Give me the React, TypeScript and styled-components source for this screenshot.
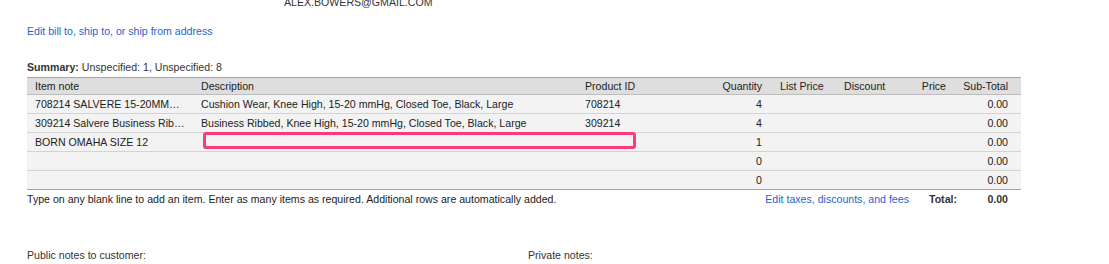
import { createGlobalStyle, styled } from "styled-components";

const GlobalStyle = createGlobalStyle`
  body {
    margin: 0;
    background: #fff;
    font: 10.6px/14px "Liberation Sans", Arial, sans-serif;
    color: #222;
  }
`;

const Page = styled.div`
  padding-left: 27px;
  width: 994px;
  height: 264px;
  overflow: hidden;
`;

const Email = styled.div`
  margin-top: -5px;
  padding-left: 257px;
  color: #333;
`;

const Link = styled.a`
  color: #1f64c8;
  text-decoration: none;
  cursor: pointer;
`;

const EditAddress = styled.div`
  margin-top: 15px;
`;

const Summary = styled.div`
  margin-top: 22px;
  color: #333;
  b {
    font-weight: bold;
  }
`;

const Table = styled.div`
  position: relative;
  margin-top: 3px;
  border-bottom: 1px solid #a3a3a3;
`;

const columns = "166px 384px 123px 70px 66px 64px 54px 67px";

const HeaderRow = styled.div`
  display: grid;
  grid-template-columns: ${columns};
  height: 16px;
  line-height: 17px;
  background: #dedede;
  border-top: 1px solid #a5a5a5;
  border-bottom: 1px solid #bdbdbd;
`;

const Row = styled.div`
  display: grid;
  grid-template-columns: ${columns};
  height: 18px;
  line-height: 19px;
  background: #f3f3f3;
  & + & {
    border-top: 1px solid #d3d3d3;
  }
`;

const Cell = styled.div<{ $align?: "left" | "right"; $pl?: number; $pr?: number }>`
  text-align: ${(p) => p.$align ?? "left"};
  padding-left: ${(p) => p.$pl ?? 8}px;
  padding-right: ${(p) => p.$pr ?? 8}px;
  white-space: nowrap;
  overflow: hidden;
  text-overflow: ellipsis;
`;

const Highlight = styled.div`
  position: absolute;
  left: 176px;
  top: 55px;
  width: 427px;
  height: 11px;
  border: 3px solid #fb3a78;
  border-radius: 3px;
`;

const Footer = styled.div`
  display: flex;
  justify-content: space-between;
  margin-top: 2px;
  padding-right: 13px;
`;

const Totals = styled.div`
  display: flex;
  align-items: center;
`;

const TotalLabel = styled.span`
  font-weight: bold;
  color: #333;
  margin-left: 20px;
`;

const TotalValue = styled.span`
  font-weight: bold;
  color: #333;
  width: 51px;
  text-align: right;
`;

const Notes = styled.div`
  display: grid;
  grid-template-columns: 501px 1fr;
  margin-top: 42px;
  color: #333;
`;

type Item = { note: string; desc: string; id: string; qty: string };

const items: Item[] = [
  {
    note: "708214 SALVERE 15-20MMHG CUSHION",
    desc: "Cushion Wear, Knee High, 15-20 mmHg, Closed Toe, Black, Large",
    id: "708214",
    qty: "4",
  },
  {
    note: "309214 Salvere Business Ribbed",
    desc: "Business Ribbed, Knee High, 15-20 mmHg, Closed Toe, Black, Large",
    id: "309214",
    qty: "4",
  },
  { note: "BORN OMAHA SIZE 12", desc: "", id: "", qty: "1" },
  { note: "", desc: "", id: "", qty: "0" },
  { note: "", desc: "", id: "", qty: "0" },
];

export default function App() {
  return (
    <Page>
      <GlobalStyle />
      <Email>ALEX.BOWERS@GMAIL.COM</Email>
      <EditAddress>
        <Link>Edit bill to, ship to, or ship from address</Link>
      </EditAddress>
      <Summary>
        <b>Summary:</b> Unspecified: 1, Unspecified: 8
      </Summary>
      <Table>
        <HeaderRow>
          <Cell>Item note</Cell>
          <Cell>Description</Cell>
          <Cell>Product ID</Cell>
          <Cell $align="right">Quantity</Cell>
          <Cell $pl={10}>List Price</Cell>
          <Cell>Discount</Cell>
          <Cell $align="right">Price</Cell>
          <Cell $align="right" $pl={2} $pr={13}>Sub-Total</Cell>
        </HeaderRow>
        {items.map((it, i) => (
          <Row key={i}>
            <Cell $pr={6}>{it.note}</Cell>
            <Cell>{it.desc}</Cell>
            <Cell>{it.id}</Cell>
            <Cell $align="right">{it.qty}</Cell>
            <Cell $pl={10} />
            <Cell />
            <Cell $align="right" />
            <Cell $align="right" $pl={2} $pr={13}>0.00</Cell>
          </Row>
        ))}
        <Highlight />
      </Table>
      <Footer>
        <span>Type on any blank line to add an item. Enter as many items as required. Additional rows are automatically added.</span>
        <Totals>
          <Link>Edit taxes, discounts, and fees</Link>
          <TotalLabel>Total:</TotalLabel>
          <TotalValue>0.00</TotalValue>
        </Totals>
      </Footer>
      <Notes>
        <span>Public notes to customer:</span>
        <span>Private notes:</span>
      </Notes>
    </Page>
  );
}
